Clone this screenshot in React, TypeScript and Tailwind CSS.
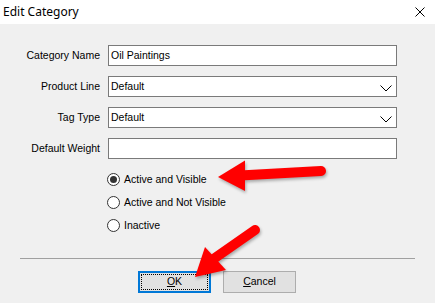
import React from 'react';

function Chevron() {
  return (
    <svg width="12" height="7" viewBox="0 0 12 7" className="absolute right-[4px] top-[8px]">
      <path d="M0.5 0.5 L6 6 L11.5 0.5" fill="none" stroke="#000" strokeWidth="1" />
    </svg>
  );
}

function Field({ label, value, select }: { label: string; value?: string; select?: boolean }) {
  return (
    <>
      <div className="h-[21px] flex items-center justify-end">{label}</div>
      <div className="relative h-[21px] border border-[#7a7a7a] bg-white flex items-center pl-[2px]">
        {value}
        {select && <Chevron />}
      </div>
    </>
  );
}

function Radio({ label, checked }: { label: string; checked?: boolean }) {
  return (
    <div className="h-[23px] flex items-center gap-[4px]">
      <span className="w-[13px] h-[13px] rounded-full border border-[#333] bg-white flex items-center justify-center">
        {checked && <span className="w-[7px] h-[7px] rounded-full bg-[#333]" />}
      </span>
      <span>{label}</span>
    </div>
  );
}

function Arrows() {
  return (
    <svg
      width="435"
      height="303"
      className="absolute inset-0 pointer-events-none"
      style={{ filter: 'drop-shadow(1px 2px 1.5px rgba(0,0,0,0.3))' }}
    >
      <line x1="240" y1="175.5" x2="321" y2="171" stroke="#ff0000" strokeWidth="10" strokeLinecap="round" />
      <polygon points="218,177 245,160.5 245,191" fill="#ff0000" />
      <line x1="212" y1="260" x2="255" y2="230" stroke="#ff0000" strokeWidth="10" strokeLinecap="round" />
      <polygon points="195,277 205,247 226,270" fill="#ff0000" />
    </svg>
  );
}

export default function App() {
  return (
    <div className="relative w-[435px] h-[303px] bg-[#f0f0f0] overflow-hidden text-[10.5px] text-black" style={{ fontFamily: '"Liberation Sans", Arial, sans-serif' }}>
      <div className="h-[24px] bg-white flex items-center justify-between pl-[3px] pr-[10px]">
        <span className="text-[12px]" style={{ fontFamily: '"Noto Sans", "Open Sans", sans-serif' }}>Edit Category</span>
        <svg width="10" height="10" viewBox="0 0 10 10">
          <path d="M0.5 0.5 L9.5 9.5 M9.5 0.5 L0.5 9.5" stroke="#000" strokeWidth="1" />
        </svg>
      </div>

      <div className="pt-[21px]">
        <div className="grid grid-cols-[100px_289px] gap-x-[8px] gap-y-[10px]">
          <Field label="Category Name" value="Oil Paintings" />
          <Field label="Product Line" value="Default" select />
          <Field label="Tag Type" value="Default" select />
          <Field label="Default Weight" />
        </div>

        <div className="pl-[107px] mt-[9px]">
          <Radio label="Active and Visible" checked />
          <Radio label="Active and Not Visible" />
          <Radio label="Inactive" />
        </div>

        <div className="mx-[20px] mt-[21px] h-px bg-[#a0a0a0]" />

        <div className="mt-[12px] flex pl-[138px] gap-[12px]">
          <button className="w-[73px] h-[22px] border-2 border-[#0078d7] bg-[#e1e1e1] p-[1px]">
            <span className="w-full h-full border border-dotted border-black flex items-center justify-center">
              <span><u>O</u>K</span>
            </span>
          </button>
          <button className="w-[73px] h-[22px] border border-[#adadad] bg-[#e1e1e1] flex items-center justify-center">
            <span><u>C</u>ancel</span>
          </button>
        </div>
      </div>

      <Arrows />
    </div>
  );
}
